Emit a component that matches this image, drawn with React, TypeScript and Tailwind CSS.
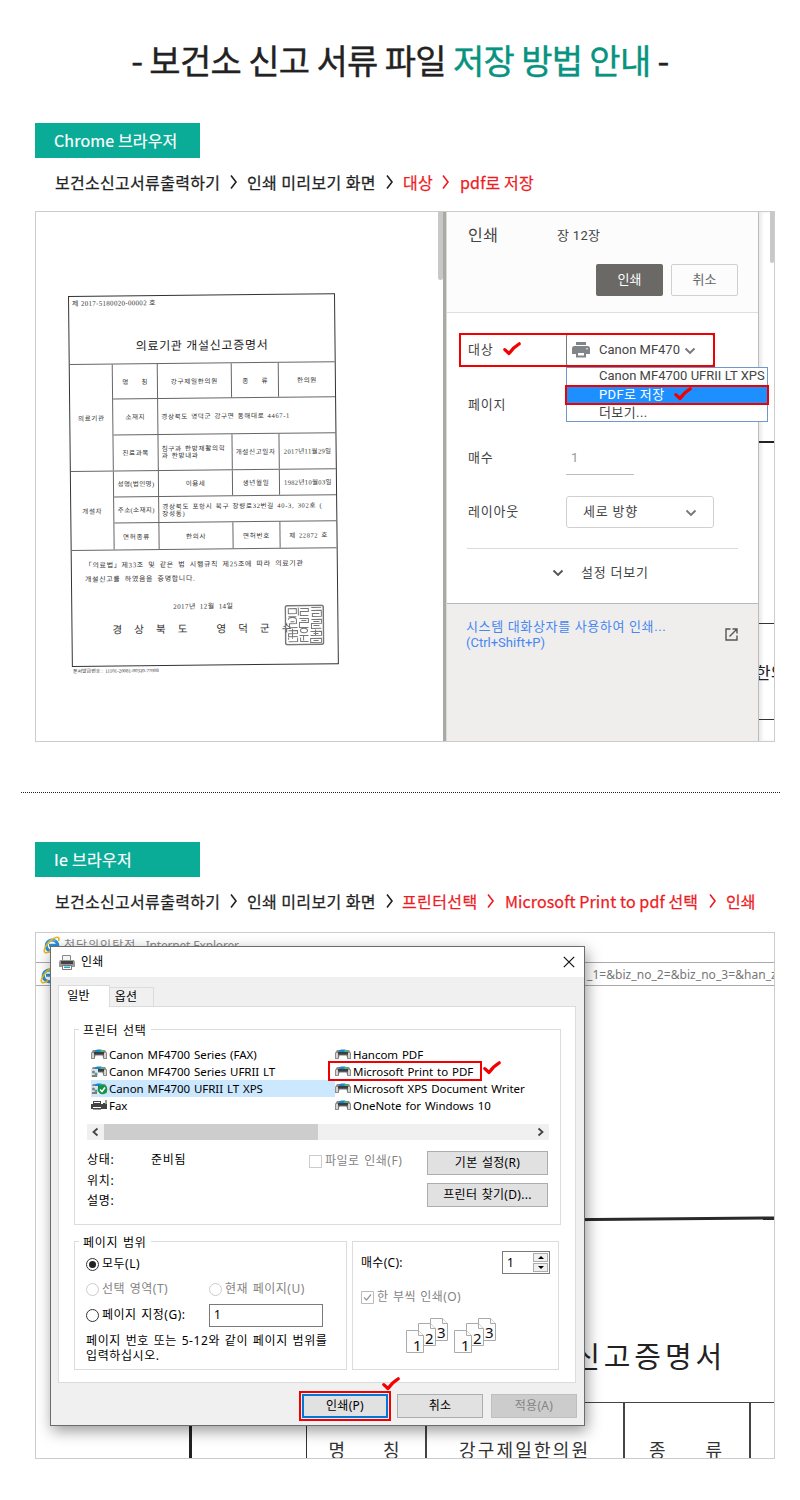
import type { ReactNode } from "react";

function Check({ className }: { className: string }) {
  return (
    <svg viewBox="0 0 18 14" className={"absolute z-20 h-[14px] w-[18px] " + className} fill="none">
      <path d="M1.800 7.600 6 11.500C8.600 7.800 12 4.200 16.200 1.800" stroke="#f50000" strokeWidth="3.200" strokeLinecap="round" strokeLinejoin="round" />
    </svg>
  );
}

function Arrow({ className }: { className: string }) {
  return (
    <svg viewBox="0 0 9 16" className={"h-4 w-[9px] shrink-0 " + className} fill="none">
      <path d="M2 1.500 7 8 2 14.500" stroke="currentColor" strokeWidth="1.600" />
    </svg>
  );
}

function Chevron({ className }: { className: string }) {
  return (
    <svg viewBox="0 0 12 8" className={"h-2 w-3 " + className} fill="none">
      <path d="m1.500 1.500 4.500 4.500 4.500-4.500" stroke="currentColor" strokeWidth="1.900" />
    </svg>
  );
}

function Badge({ children, className }: { children: ReactNode; className: string }) {
  return (
    <div className={"ml-[35px] flex h-[35px] w-[165px] items-center bg-[#0aab97] pb-px pl-[19px] text-base text-white " + className}>
      {children}
    </div>
  );
}

function Cell({ children, className = "" }: { children?: ReactNode; className?: string }) {
  return <div className={"flex items-center justify-center border-[#666] whitespace-pre " + className}>{children}</div>;
}

function Seal() {
  return (
    <svg viewBox="0 0 40 41" className="absolute top-[310px] left-[212px] h-[41px] w-10" fill="none" stroke="#777" strokeWidth="1">
      <rect x="1" y="1" width="38" height="39" rx="2" strokeWidth="1.500" />
      <path d="M4 4h8v5H4zM14 3v8M16 4h8v3h-8v4h8M27 3h10M27 6h10v6h-9v-3h7M4 12h8M4 15c0-3 8-3 8 0v4H5v4h8M15 14h9v4h-9v5h9M27 15h10v4H27v5h10M6 17h4M17 16h5M29 17h6M29 21h6" />
      <path d="M4 26h9v3H4v3h9M8 24v10M16 26c0-3 7-3 7 0s-7 3-7 0M15 31h9M26 27h11v4H26M29 29h5M4 35v-2M4 37h9v-4M16 33v4h8M19 31v5M26 34h11v4H26zM29 36h5M31 25v6" />
    </svg>
  );
}

function Certificate() {
  return (
    <div className="relative mt-[84px] ml-8 flex h-[371px] w-[267px] origin-top-left -rotate-[0.6deg] flex-col border-[1.500px] border-[#333] font-[family-name:'Liberation_Serif','Noto_Sans_CJK_KR',serif] text-[6.600px] leading-[7px] text-[#333]">
      <div className="h-[68px] shrink-0 border-b border-[#666]">
        <div className="pt-[4px] pl-[3px] text-[7px] tracking-[0.3px]">제 2017-5180020-00002 호</div>
        <div className="pt-[32px] text-center text-[12px] leading-[14px] tracking-[0.700px] text-[#222]">의료기관 개설신고증명서</div>
      </div>
      <div className="flex h-[107px] shrink-0 border-b border-[#666]">
        <Cell className="w-[43px] border-r tracking-[0.600px]">의료기관</Cell>
        <div className="grid flex-1 grid-rows-3">
          <div className="flex border-b border-[#666]">
            <Cell className="w-[45px] border-r">{"명        칭"}</Cell>
            <Cell className="w-[74px] border-r tracking-[0.7px]">강구제일한의원</Cell>
            <Cell className="w-[47px] border-r">{"종        류"}</Cell>
            <Cell className="flex-1 tracking-[0.5px]">한의원</Cell>
          </div>
          <div className="flex border-b border-[#666]">
            <Cell className="w-[45px] border-r tracking-[0.5px]">소재지</Cell>
            <div className="flex items-center pl-[3px] tracking-[0.6px] [word-spacing:1px]">경상북도 영덕군 강구면 동해대로 4467-1</div>
          </div>
          <div className="flex">
            <Cell className="w-[45px] border-r tracking-[0.5px]">진료과목</Cell>
            <div className="flex w-[74px] items-center border-r border-[#666] pl-[3px] tracking-[0.650px] whitespace-pre [word-spacing:1px]">{"침구과 한방재활의학\n과 한방내과"}</div>
            <Cell className="w-[47px] border-r tracking-[0.6px]">개설신고일자</Cell>
            <Cell className="flex-1 tracking-[0.3px]">2017년11월29일</Cell>
          </div>
        </div>
      </div>
      <div className="flex h-[79px] shrink-0 border-b border-[#666]">
        <Cell className="w-[43px] border-r tracking-[0.600px]">개설자</Cell>
        <div className="grid flex-1 grid-rows-3">
          <div className="flex border-b border-[#666]">
            <Cell className="w-[45px] border-r tracking-[0.3px]">성명(법인명)</Cell>
            <Cell className="w-[74px] border-r tracking-[0.5px]">이용세</Cell>
            <Cell className="w-[47px] border-r tracking-[0.7px]">생년월일</Cell>
            <Cell className="flex-1 tracking-[0.3px]">1982년10월03일</Cell>
          </div>
          <div className="flex border-b border-[#666]">
            <Cell className="w-[45px] border-r tracking-[0.3px]">주소(소재지)</Cell>
            <div className="flex items-center pl-[3px] tracking-[0.650px] whitespace-pre [word-spacing:1px]">{"경상북도 포항시 북구 장량로32번길 40-3, 302호 (\n장성동)"}</div>
          </div>
          <div className="flex">
            <Cell className="w-[45px] border-r tracking-[0.7px]">면허종류</Cell>
            <Cell className="w-[74px] border-r tracking-[0.6px]">한의사</Cell>
            <Cell className="w-[47px] border-r tracking-[0.7px]">면허번호</Cell>
            <Cell className="flex-1 tracking-[0.5px] [word-spacing:1px]">제 22872 호</Cell>
          </div>
        </div>
      </div>
      <div className="pt-[9px] pl-[13px] text-[7px] leading-[13.500px] tracking-[0.650px] whitespace-pre [word-spacing:2px]">{"「의료법」제33조 및 같은 법 시행규칙 제25조에 따라 의료기관\n개설신고를 하였음을 증명합니다."}</div>
      <div className="pt-[18px] pl-[101px] text-[7px] tracking-[0.4px] [word-spacing:2px]">2017년 12월 14일</div>
      <div className="flex pt-3 pl-[40px] text-[10.500px] leading-[14px]">
        <span className="w-[104px] tracking-[12.100px]">경상북도</span>
        <span className="tracking-[12.100px] whitespace-nowrap">영덕군수</span>
      </div>
      <Seal />
      <div className="absolute top-[371px] left-0 text-[5px] tracking-[-0.050px] whitespace-nowrap">문서발급번호 :&nbsp; 11101-20081-00320-77008</div>
    </div>
  );
}

function SettingLabel({ children }: { children: ReactNode }) {
  return <div className="w-[98px] shrink-0 text-[13px] tracking-[0.8px]">{children}</div>;
}

function ChromePanel() {
  return (
    <div className="flex w-[311px] shrink-0 flex-col bg-white font-[family-name:Roboto,'Noto_Sans_CJK_KR',sans-serif] text-[13px] text-[#444]">
      <div className="h-[101px] border-b border-[#dedede] bg-[#fcfcfc] pl-[21px]">
        <div className="flex h-[48px] items-center">
          <span className="w-[89px] text-[16px] tracking-[0.6px]">인쇄</span>
          <span className="tracking-[0.3px]">장 12장</span>
        </div>
        <div className="flex gap-2 pt-[4px] pl-[128px]">
          <div className="flex h-8 w-[67px] items-center justify-center rounded-[2px] bg-[#6a6966] pb-px text-white">인쇄</div>
          <div className="flex h-8 w-[67px] items-center justify-center rounded-[2px] border border-[#d0d0d0] pb-px text-[#666]">취소</div>
        </div>
      </div>
      <div className="relative h-[291px] border-b border-[#b8b8b8] pt-[10px] pl-[21px]">
        <div className="flex h-[54px] items-center">
          <SettingLabel>대상</SettingLabel>
          <div className="flex h-8 w-[148px] items-center rounded-[2px] border border-[#777] pl-[5px] text-[#444]">
            <svg viewBox="0 0 18 16" className="h-4 w-[18px]">
              <path fill="#808589" d="M4 0h10v3H4zM2.500 4h13A2.500 2.500 0 0 1 18 6.500V12h-4V9H4v3H0V6.500A2.500 2.500 0 0 1 2.500 4z" />
              <circle cx="15" cy="6.800" r=".8" fill="#fff" />
              <path fill="none" stroke="#808589" strokeWidth="2" d="M5 10h8v4.500H5z" />
            </svg>
            <span className="ml-[9px] w-[82px] overflow-hidden whitespace-nowrap">Canon MF470</span>
            <Chevron className="mt-[2px] ml-[3px] text-[#777]" />
          </div>
        </div>
        <div className="flex h-[54px] items-center pt-px"><SettingLabel>페이지</SettingLabel></div>
        <div className="flex h-[54px] items-center">
          <SettingLabel>매수</SettingLabel>
          <div className="flex h-[33px] w-[68px] items-center border-b border-[#bbb] pt-px pl-[5px] text-[#999]">1</div>
        </div>
        <div className="flex h-[54px] items-center">
          <SettingLabel>레이아웃</SettingLabel>
          <div className="flex h-8 w-[148px] items-center justify-between rounded-[3px] border border-[#d0d0d0] pr-[16px] pl-4">
            <span className="tracking-[0.8px]">세로 방향</span>
            <Chevron className="mt-[2px] text-[#777]" />
          </div>
        </div>
        <div className="mt-[9px] -ml-px flex h-[49px] w-[271px] items-center border-t border-[#dadada] pl-[85px]">
          <Chevron className="text-[#555]" />
          <span className="ml-[17px] tracking-[0.8px]">설정 더보기</span>
        </div>
        <div className="absolute top-5 left-3 z-10 h-[34px] w-[256px] border-2 border-[#f00000]" />
        <Check className="top-[29px] left-[56px]" />
        <div className="absolute top-[54px] left-[119px] z-10 h-[55px] w-[202px] border border-[#7296ce] bg-white text-[13px] leading-[18px] whitespace-nowrap">
          <div className="-mt-px mb-px pl-8 tracking-[0.010px]">Canon MF4700 UFRII LT XPS</div>
          <div className="-mx-[2px] -my-px flex h-5 items-center border-2 border-[#f00000] bg-[#1e8fff] pl-8 tracking-[0.350px] text-white">PDF로 저장</div>
          <div className="-mt-px pl-8 tracking-[0.4px]">더보기...</div>
          <Check className="top-[19px] left-[107px]" />
        </div>
      </div>
      <div className="flex flex-1 justify-between bg-[#efeeed] pt-[15px] pr-5 pl-5 leading-4 text-[#4687f2]">
        <div className="-ml-px whitespace-nowrap">
          <div className="tracking-[0.65px]">시스템 대화상자를 사용하여 인쇄...</div>
          <div>(Ctrl+Shift+P)</div>
        </div>
        <svg viewBox="0 0 13 13" className="mt-[9px] h-[13px] w-[13px]" fill="none" stroke="#555" strokeWidth="1.400">
          <path d="M5.500 1H1v11h11V7.500M7.500 1H12v4.500M12 1 4.500 8.500" />
        </svg>
      </div>
    </div>
  );
}

function IeIcon({ className }: { className: string }) {
  return (
    <svg viewBox="0 0 18 18" className={"h-[18px] w-[18px] " + className} fill="none">
      <path d="M14.500 11.800A5.800 5.800 0 1 1 14.800 9.200H6" stroke="#2a91d4" strokeWidth="3" />
      <path d="M4.500 7.500a5.500 5.500 0 0 1 8-2.500" stroke="#76c9f5" strokeWidth="1" />
      <path d="M2 16.500C-1 13 7 3 13 1.500c3-.8 3.500 1 2.500 3.500M2 16.500c1.500 1 4-.5 6-2" stroke="#e8b820" strokeWidth="1.600" />
    </svg>
  );
}

type PrinterKind = "plain" | "shared" | "default" | "fax";

function PrinterIcon({ kind }: { kind: PrinterKind }) {
  if (kind === "fax") {
    return (
      <svg viewBox="0 0 17 13" className="h-[13px] w-[17px] shrink-0">
        <path fill="#444" d="M2 2h8v3H2zM0 5h12v5H0zM12 4h4v6h-4z" />
        <path fill="#fff" d="M3 3h6v1H3zM2 8h8v1H2z" />
        <path fill="#999" d="M2 10h8v1H2zM14 1h2v4h-2z" />
      </svg>
    );
  }
  return (
    <svg viewBox="0 0 17 13" className="h-[13px] w-[17px] shrink-0">
      <path fill="#8c8c8c" d="M2 2h12l2 3v6H0V5z" />
      <path fill="#d4d4d4" d="M1 5h2v5H1zM13 5h2v5h-2z" />
      <path fill="#1687d0" d="M4 2.500C5 1 11 1 12 2.500V4H4z" />
      <path fill="#40c463" d="M9.500 1.500 12 2.500V4H9.500z" />
      <path fill="#3d3d3d" d="M3 4h10v3H3z" />
      <path fill="#777" d="M3 6.500h10V11H3z" />
      <path fill="#fff" d="M4.500 7.500h7l1 4h-9z" />
      {kind !== "plain" && (
        <g>
          <path fill="#dce6ec" d="M0 4h7v8H0z" />
          <circle cx="2.500" cy="7" r="1.500" fill="#77848c" />
          <circle cx="5" cy="9" r="1.500" fill="#4d9bb5" />
          <path fill="#8b7865" d="M1 10h5v2H1z" />
        </g>
      )}
      {kind === "default" && (
        <g>
          <circle cx="11.500" cy="7.500" r="4.800" fill="#159447" />
          <path d="m9 7.500 2 2 3-4" fill="none" stroke="#fff" strokeWidth="1.500" />
        </g>
      )}
    </svg>
  );
}

function PrinterRow({ kind, name, selected = false }: { kind: PrinterKind; name: string; selected?: boolean }) {
  return (
    <div className={"flex h-[17px] items-center gap-px whitespace-nowrap " + (selected ? "bg-[#cce8ff]" : "")}>
      <PrinterIcon kind={kind} />
      {name}
    </div>
  );
}

function Legend({ children }: { children: ReactNode }) {
  return <div className="absolute -top-[8px] left-1 bg-white px-1 leading-[17px] tracking-[0.700px] whitespace-nowrap">{children}</div>;
}

function Radio({ tone, on = false }: { tone: string; on?: boolean }) {
  return (
    <span className={"flex h-[13px] w-[13px] shrink-0 items-center justify-center rounded-full border bg-white " + tone}>
      {on && <span className="h-[7px] w-[7px] rounded-full bg-[#222]" />}
    </span>
  );
}

function WinButton({ children, className }: { children: ReactNode; className: string }) {
  return <div className={"flex h-6 items-center justify-center border " + className}>{children}</div>;
}

function PageStack() {
  return (
    <svg viewBox="0 0 43 36" className="h-9 w-[43px]" fontSize="15" fontFamily="Noto Sans, sans-serif">
      <g fill="#fdfdfd" stroke="#aaa">
        <path d="M24.500.5h12l5 5v17h-17z" />
        <path d="M36.500.5v5h5" />
        <path d="M12.500 5.500h12l5 5v17h-17z" />
        <path d="M24.500 5.500v5h5" />
        <path d="M.5 12.500h12l5 5v17H.5z" />
        <path d="M12.500 12.500v5h5" />
      </g>
      <text x="31" y="20" fill="#111">3</text>
      <text x="19" y="25.500" fill="#111">2</text>
      <text x="7" y="32.500" fill="#111">1</text>
    </svg>
  );
}

function PrintDialog() {
  return (
    <div className="absolute top-[13px] left-[14px] flex h-[480px] w-[535px] flex-col border border-[#6c6c6c] bg-[#f0f0f0] font-[family-name:'Noto_Sans','Noto_Sans_CJK_KR',sans-serif] text-[12px] tracking-[0.3px] text-black shadow-[2px_5px_14px_rgba(0,0,0,0.4)] [word-spacing:1px]">
      <div className="flex h-[30px] shrink-0 items-center bg-white pr-[9px] pl-2">
        <svg viewBox="0 0 16 15" className="h-[15px] w-4">
          <path fill="#f4f4f4" stroke="#888" d="M3.500.5h8v6h-8z" />
          <path fill="#999" d="M1 5h14l1 2v5H0V7z" />
          <path fill="#444" d="M2 6h12v3H2z" />
          <path fill="#fff" stroke="#777" d="M3.500 10.500h9v4h-9z" />
          <path fill="#28a0c8" d="M5 11.500h6V13H5z" />
        </svg>
        <span className="ml-[6px] flex-1">인쇄</span>
        <svg viewBox="0 0 12 12" className="h-3 w-3" stroke="#111" strokeWidth="1.200">
          <path d="m.8.8 10.400 10.400M11.200.8.8 11.200" />
        </svg>
      </div>
      <div className="flex h-[30px] shrink-0 items-end pt-2 pl-[7px]">
        <div className="relative z-10 flex h-[22px] w-[52px] justify-center border border-b-0 border-[#dcdcdc] bg-white pt-px pr-[11px]">일반</div>
        <div className="-ml-px flex h-[20px] w-[45px] justify-center border border-b-0 border-[#dcdcdc] pr-[11px]">옵션</div>
      </div>
      <div className="-mt-px ml-[7px] h-[377px] w-[518px] shrink-0 border border-[#dcdcdc] bg-white pt-[22px] pl-[15px]">
        <div className="relative h-[196px] w-[487px] border border-[#dcdcdc] pt-4 pl-3">
          <Legend>프린터 선택</Legend>
          <div className="flex pl-1 text-[11.500px] tracking-[-0.050px]">
            <div className="w-[244px]">
              <PrinterRow kind="plain" name="Canon MF4700 Series (FAX)" />
              <PrinterRow kind="shared" name="Canon MF4700 Series UFRII LT" />
              <PrinterRow kind="default" name="Canon MF4700 UFRII LT XPS" selected />
              <PrinterRow kind="fax" name="Fax" />
            </div>
            <div>
              <PrinterRow kind="plain" name="Hancom PDF" />
              <PrinterRow kind="plain" name="Microsoft Print to PDF" />
              <PrinterRow kind="plain" name="Microsoft XPS Document Writer" />
              <PrinterRow kind="plain" name="OneNote for Windows 10" />
            </div>
          </div>
          <div className="mt-[10px] flex h-4 w-[462px] items-center justify-between bg-[#f0f0f0]">
            <svg viewBox="0 0 17 16" className="h-4 w-[17px]" fill="none" stroke="#444" strokeWidth="1.800"><path d="m10.500 4.500-4 3.500 4 3.500" /></svg>
            <div className="h-4 w-[214px] bg-[#cdcdcd]" />
            <div className="flex-1" />
            <svg viewBox="0 0 17 16" className="h-4 w-[17px]" fill="none" stroke="#444" strokeWidth="1.800"><path d="m6.500 4.500 4 3.500-4 3.500" /></svg>
          </div>
          <div className="flex pt-[11px]">
            <div className="-mt-px w-16 leading-[20.500px] tracking-[0.700px]">
              <div>상태:</div><div>위치:</div><div>설명:</div>
            </div>
            <div className="-mt-px w-[158px] leading-[20px] tracking-[0.700px]">준비됨</div>
            <div className="flex h-5 w-[118px] items-center gap-[3px] tracking-[0.500px] text-[#848484]">
              <span className="h-[13px] w-[13px] border border-[#ccc] bg-white" />
              <span className="whitespace-nowrap">파일로 인쇄(F)</span>
            </div>
            <div className="flex w-[121px] flex-col gap-2">
              <WinButton className="border-[#adadad] bg-[#e1e1e1]">기본 설정(R)</WinButton>
              <WinButton className="border-[#adadad] bg-[#e1e1e1]">프린터 찾기(D)...</WinButton>
            </div>
          </div>
          <div className="absolute top-[31px] left-[253px] h-[20px] w-[154px] border-2 border-[#f00000]" />
          <Check className="top-[31px] left-[408px]" />
        </div>
        <div className="mt-4 flex gap-[5px]">
          <div className="relative h-[129px] w-[273px] border border-[#dcdcdc] pl-[11px]">
            <Legend>페이지 범위</Legend>
            <div className="mt-[11px] flex h-[22px] items-center gap-[3px] tracking-[0.500px]"><Radio tone="border-[#333]" on />모두(L)</div>
            <div className="mt-[3px] flex h-[22px] items-center tracking-[0.500px] text-[#848484]">
              <div className="flex w-[123px] items-center gap-[3px]"><Radio tone="border-[#ccc]" />선택 영역(T)</div>
              <div className="flex items-center gap-[3px]"><Radio tone="border-[#ccc]" />현재 페이지(U)</div>
            </div>
            <div className="mt-[3px] flex h-6 items-center">
              <div className="flex w-[123px] items-center gap-[3px] tracking-[0.500px]"><Radio tone="border-[#333]" />페이지 지정(G):</div>
              <div className="flex h-[23px] w-[114px] items-center border border-[#7a7a7a] pl-1">1</div>
            </div>
            <div className="mt-[6px] leading-[15px] tracking-[0.6px] whitespace-pre">{"페이지 번호 또는 5-12와 같이 페이지 범위를\n입력하십시오."}</div>
          </div>
          <div className="h-[129px] w-[207px] border border-[#dcdcdc] pt-[9px] pl-2">
            <div className="flex h-[23px] w-[189px] items-center justify-between">
              <span>매수(C):</span>
              <div className="flex h-[23px] w-12 justify-between border border-[#7a7a7a] pl-1">
                <span className="leading-[21px]">1</span>
                <div className="flex w-[17px] flex-col gap-px p-px">
                  <div className="flex flex-1 items-center justify-center border border-[#adadad] bg-[#f0f0f0]"><span className="border-x-[3px] border-b-[3px] border-x-transparent border-b-black" /></div>
                  <div className="flex flex-1 items-center justify-center border border-[#adadad] bg-[#f0f0f0]"><span className="border-x-[3px] border-t-[3px] border-x-transparent border-t-black" /></div>
                </div>
              </div>
            </div>
            <div className="mt-[13px] flex h-5 items-center gap-[3px] tracking-[0.400px] text-[#848484]">
              <svg viewBox="0 0 13 13" className="h-[13px] w-[13px]" fill="none" stroke="#bbb"><path d="M.5.5h12v12H.5z" /><path d="m3 6.500 2.500 2.500L10 3.500" stroke="#999" strokeWidth="1.200" /></svg>
              한 부씩 인쇄(O)
            </div>
            <div className="mt-[11px] flex gap-[5px] pl-[45px]"><PageStack /><PageStack /></div>
          </div>
        </div>
      </div>
      <div className="relative flex gap-2 pt-[9px] pl-[248px]">
        <div className="-mt-[1px] h-[30px] w-[92px] border-2 border-[#f00000] bg-[#f0f0f0] p-px">
          <div className="flex h-6 items-center justify-center border-2 border-[#0078d7] bg-[#e1e1e1]">인쇄(P)</div>
        </div>
        <WinButton className="-ml-[2px] mt-[2px] w-[86px] border-[#adadad] bg-[#e1e1e1]">취소</WinButton>
        <WinButton className="mt-[2px] w-[86px] border-[#bfbfbf] bg-[#cccccc] text-[#848484]">적용(A)</WinButton>
        <Check className="-top-[6px] left-[331px]" />
      </div>
    </div>
  );
}

function IePage() {
  return (
    <div className="flex h-full w-[738px] flex-col overflow-hidden font-[family-name:'Noto_Sans','Noto_Sans_CJK_KR',sans-serif] text-[12px] text-[#888]">
      <div className="flex h-[29px] shrink-0 items-start gap-[3px] pt-[3px] pl-[7px] whitespace-nowrap">
        <IeIcon className="" />
        <span className="pt-px">
          <span className="tracking-[1px]">청담위인탁점</span>
          <span className="tracking-[-0.200px]"> - Internet Explorer</span>
        </span>
      </div>
      <div className="flex h-[24px] shrink-0 items-center border-y border-[#aaa] pl-1">
        <IeIcon className="mt-px shrink-0" />
        <div className="w-[529px] shrink-0" />
        <span className="pt-px tracking-[0.05px] whitespace-nowrap text-[#777]">_1=&amp;biz_no_2=&amp;biz_no_3=&amp;han_zip</span>
      </div>
      <div className="ml-[154px] h-[236px] w-[584px] shrink-0 -skew-y-[0.5deg] border-b-[3px] border-[#2a2a2a]" />
      <div className="ml-[154px] flex h-[181px] w-[584px] shrink-0 items-end border-b border-[#444] pb-[28px] pl-[322px] text-[29px] leading-[34px] tracking-[3.900px] whitespace-nowrap text-[#222]">개설신고증명서</div>
      <div className="ml-[153px] flex h-[59px] w-[585px] shrink-0 border-l-[3px] border-[#222] pt-0 text-[18px] leading-6 text-[#333]">
        <div className="w-[115px] border-r border-[#333]" />
        <div className="flex w-[120px] items-end justify-center gap-[38px] border-r-2 border-[#444] pr-1"><span>명</span><span>칭</span></div>
        <div className="flex w-[198px] items-end border-r-2 border-[#444] pl-8 tracking-[2.200px]">강구제일한의원</div>
        <div className="flex w-[126px] items-end gap-[40px] border-r-2 border-[#444] pl-6"><span>종</span><span>류</span></div>
      </div>
    </div>
  );
}

export default function App() {
  return (
    <main className="h-[1500px] w-[800px] overflow-hidden bg-white font-[family-name:'Noto_Sans_CJK_KR',sans-serif] text-[#222]">
      <h1 className="pt-[35px] pb-[2px] text-center text-[34px] leading-[50px] tracking-[-0.650px] whitespace-nowrap [-webkit-text-stroke:0.400px]">
        - 보건소 신고 서류 파일 <span className="text-[#07937f]">저장 방법 안내</span> -
      </h1>

      <section className="pt-9">
        <Badge className="tracking-[0.150px] [-webkit-text-stroke:0.200px]">Chrome 브라우저</Badge>
        <div className="flex h-[53px] items-center pb-[5px] pl-[55px] text-base whitespace-nowrap [-webkit-text-stroke:0.250px]">
          <span className="w-[174px] tracking-[0.3px]">보건소신고서류출력하기</span>
          <Arrow className="mr-[9px]" />
          <span className="w-[138px] tracking-[0.4px]">인쇄 미리보기 화면</span>
          <Arrow className="mr-[9px]" />
          <span className="w-[38px] tracking-[0.300px] text-[#ed1c24]">대상</span>
          <Arrow className="mr-[10px] text-[#ed1c24]" />
          <span className="tracking-[0.150px] text-[#ed1c24]">pdf로 저장</span>
        </div>
        <div className="ml-[35px] flex h-[531px] w-[740px] border border-[#ccc]">
          <div className="relative w-[407px] shrink-0">
            <Certificate />
            <div className="absolute top-0 right-0 h-[68px] w-[5px] rounded-b bg-[#c8c8c8]" />
          </div>
          <div className="w-1 shrink-0 border-r border-[#d8d8d4] bg-[#a9a9a6]" />
          <ChromePanel />
          <div className="relative flex w-4 shrink-0 flex-col overflow-hidden border-l border-[#bbb] shadow-[inset_3px_0_3px_rgba(0,0,0,0.08)]">
            <div className="h-[231px] shrink-0 border-b-2 border-[#222]" />
            <div className="h-[181px] shrink-0 border-b border-[#333]" />
            <div className="h-[96px] shrink-0 border-b border-[#333] pt-9 text-[17px] leading-6 whitespace-nowrap"><span className="-ml-1">한의원</span></div>
            <div className="absolute top-0 right-0 h-[51px] w-1 rounded-b bg-[#c8c8c8]" />
          </div>
        </div>
      </section>

      <div className="mt-[50px] ml-[21px] h-px w-[759px] bg-[repeating-linear-gradient(90deg,#222_0_1px,transparent_1px_2px)]" />

      <section className="pt-[49px]">
        <Badge className="tracking-[0.300px] [-webkit-text-stroke:0.200px]">Ie 브라우저</Badge>
        <div className="flex h-[55px] items-center pb-[7px] pl-[55px] text-base whitespace-nowrap [-webkit-text-stroke:0.250px]">
          <span className="w-[174px] tracking-[0.3px]">보건소신고서류출력하기</span>
          <Arrow className="mr-[9px]" />
          <span className="w-[138px] tracking-[0.4px]">인쇄 미리보기 화면</span>
          <Arrow className="mr-[8px]" />
          <span className="w-[84px] tracking-[0.400px] text-[#ed1c24]">프린터선택</span>
          <Arrow className="mr-[10px] text-[#ed1c24]" />
          <span className="w-[203px] tracking-[0.100px] text-[#ed1c24]">Microsoft Print to pdf 선택</span>
          <Arrow className="mr-[9px] text-[#ed1c24]" />
          <span className="text-[#ed1c24]">인쇄</span>
        </div>
        <div className="relative ml-[35px] h-[527px] w-[740px] border border-[#ccc]">
          <IePage />
          <PrintDialog />
        </div>
      </section>
    </main>
  );
}
